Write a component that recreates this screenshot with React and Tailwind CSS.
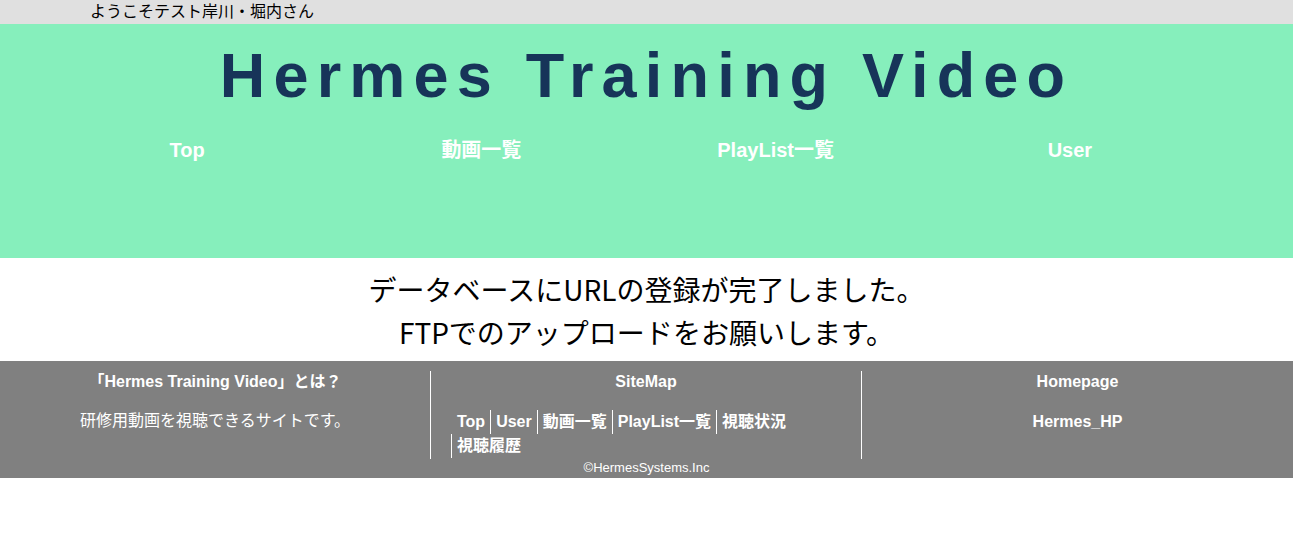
import React from "react";

const JP = { fontFamily: '"Liberation Sans", "Noto Sans CJK JP", sans-serif' };

const NAV = ["Top", "動画一覧", "PlayList一覧", "User"];
const SITEMAP = ["Top", "User", "動画一覧", "PlayList一覧", "視聴状況", "視聴履歴"];

export default function App() {
  return (
    <div className="w-full min-h-screen bg-white" style={JP}>
      {/* welcome bar */}
      <div className="h-6 bg-[#e0e0e0] pl-[90px] text-base leading-[20px] text-black"
        style={{ fontFamily: '"Noto Sans CJK JP", sans-serif' }}>
        ようこそテスト岸川・堀内さん
      </div>

      {/* header */}
      <header className="h-[234px] bg-[#86efbc] pt-[14px]">
        <h1 className="text-center text-[63px] leading-[75px] font-bold tracking-[0.13em] text-[#173459]"
          style={{ fontFamily: '"Liberation Sans", Arial, sans-serif' }}>
          Hermes Training Video
        </h1>
        <nav className="mt-[23px] ml-[40px] w-[1177px] grid grid-cols-4 text-center">
          {NAV.map(n => (
            <a key={n} className="text-white font-bold text-xl leading-7">{n}</a>
          ))}
        </nav>
      </header>

      {/* message */}
      <main className="pt-[10px] pb-[7px] text-center text-[28px] leading-[43px] text-black"
        style={{ fontFamily: '"Noto Sans CJK JP", sans-serif' }}>
        <p>データベースにURLの登録が完了しました。</p>
        <p>FTPでのアップロードをお願いします。</p>
      </main>

      {/* footer */}
      <footer className="bg-[#808080] text-white pt-[10px] pb-[1px]">
        <div className="grid grid-cols-3">
          <div className="h-[88px] border-r border-white text-center">
            <h3 className="text-base font-bold leading-[22px]">「Hermes Training Video」とは？</h3>
            <p className="mt-[16px] text-base leading-6">研修用動画を視聴できるサイトです。</p>
          </div>
          <div className="h-[88px] border-r border-white">
            <h3 className="text-center text-base font-bold leading-[22px]">SiteMap</h3>
            <ul className="mt-[17px] pl-[20px] pr-[26px] flex flex-wrap">
              {SITEMAP.map((s, i) =>
                i === 0 ? (
                  <li key={s} className="text-base font-bold leading-6 pl-[6px] pr-[5px]">{s}</li>
                ) : (
                  <li key={s} className="text-base font-bold leading-6 px-[5px] border-l border-white">{s}</li>
                )
              )}
            </ul>
          </div>
          <div className="h-[88px] text-center">
            <h3 className="text-base font-bold leading-[22px]">Homepage</h3>
            <p className="mt-[17px] text-base font-bold leading-6">Hermes_HP</p>
          </div>
        </div>
        <p className="text-center text-[13px] leading-[18px]">©HermesSystems.Inc</p>
      </footer>
    </div>
  );
}
